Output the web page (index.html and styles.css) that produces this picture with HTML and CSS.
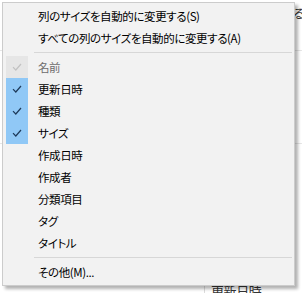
FILE: index.html
```html
<!DOCTYPE html>
<html lang="ja">
<head>
    <meta charset="UTF-8">
    <title>列メニュー</title>
    <link rel="stylesheet" href="styles.css">
</head>
<body>
    <div class="backdrop">
        <span class="bg-text bg-top">る</span>
        <span class="bg-line bg-line1"></span>
        <span class="bg-line bg-line2"></span>
        <span class="bg-text bg-bottom">更新日時</span>
        <span class="bg-vline"></span>
    </div>

    <div class="menu">
        <div class="item"><span class="check"></span><span class="label">列のサイズを自動的に変更する(S)</span></div>
        <div class="item"><span class="check"></span><span class="label">すべての列のサイズを自動的に変更する(A)</span></div>
        <div class="sep"></div>
        <div class="item disabled"><span class="check on"><svg viewBox="0 0 10 8"><path d="M1 4.2 L3.8 7 L9 1"/></svg></span><span class="label">名前</span></div>
        <div class="item"><span class="check on"><svg viewBox="0 0 10 8"><path d="M1 4.2 L3.8 7 L9 1"/></svg></span><span class="label">更新日時</span></div>
        <div class="item"><span class="check on"><svg viewBox="0 0 10 8"><path d="M1 4.2 L3.8 7 L9 1"/></svg></span><span class="label">種類</span></div>
        <div class="item"><span class="check on"><svg viewBox="0 0 10 8"><path d="M1 4.2 L3.8 7 L9 1"/></svg></span><span class="label">サイズ</span></div>
        <div class="item"><span class="check"></span><span class="label">作成日時</span></div>
        <div class="item"><span class="check"></span><span class="label">作成者</span></div>
        <div class="item"><span class="check"></span><span class="label">分類項目</span></div>
        <div class="item"><span class="check"></span><span class="label">タグ</span></div>
        <div class="item"><span class="check"></span><span class="label">タイトル</span></div>
        <div class="sep"></div>
        <div class="item"><span class="check"></span><span class="label">その他(M)...</span></div>
    </div>
</body>
</html>
```

FILE: styles.css
```css
body {
    margin: 0;
    background: #ffffff;
    font-family: "Noto Sans CJK JP", "Noto Sans", sans-serif;
    font-size: 11.5px;
    letter-spacing: -0.4px;
    font-feature-settings: "palt" 1;
    color: #000;
    overflow: hidden;
}

/* window content behind the menu */
.backdrop {
    position: relative;
    width: 302px;
    height: 293px;
}

.bg-text {
    position: absolute;
    color: #333;
    white-space: nowrap;
}

.bg-top {
    left: 293px;
    top: 3px;
    font-size: 13px;
}

.bg-bottom {
    left: 211px;
    top: 281px;
    font-size: 13px;
}

.bg-line {
    position: absolute;
    height: 1px;
    background: #e6e6e6;
}

.bg-line1 {
    left: 0;
    top: 143px;
    width: 302px;
}

.bg-line2 {
    left: 0;
    top: 50px;
    width: 302px;
}

.bg-vline {
    position: absolute;
    left: 204px;
    top: 284px;
    width: 1px;
    height: 9px;
    background: #dcdcdc;
}

/* context menu */
.menu {
    position: absolute;
    left: 2px;
    top: 2px;
    width: 291px;
    padding: 2px 0;
    background: #f2f2f2;
    border: 1px solid #cccccc;
    box-shadow: 3px 3px 3px rgba(0, 0, 0, 0.3);
}

.item {
    display: flex;
    align-items: center;
    height: 22px;
    padding-left: 3px;
}

.check {
    width: 22px;
    height: 22px;
    display: flex;
    align-items: center;
    justify-content: center;
}

.check.on {
    background: #90c8f6;
}

.check svg {
    width: 10px;
    height: 8px;
    fill: none;
    stroke: #1e3a5a;
    stroke-width: 1.2;
}

.label {
    margin-left: 10px;
    white-space: nowrap;
}

.disabled .label {
    color: #6d6d6d;
}

.disabled .check.on {
    background: #e6e6e6;
}

.disabled .check svg {
    stroke: #c2c2c2;
}

.sep {
    height: 1px;
    margin: 3px 2px 3px 31px;
    background: #d7d7d7;
}
```
